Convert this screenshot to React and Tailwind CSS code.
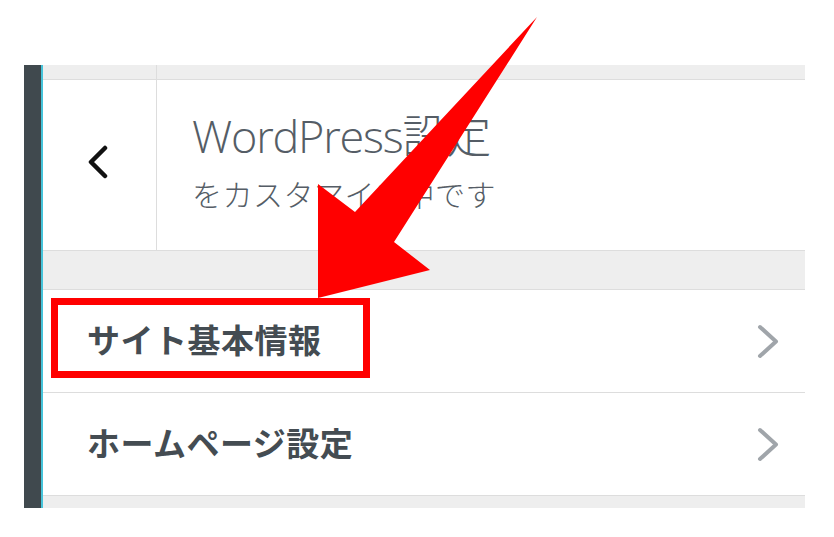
import React from "react";

const JP = { fontFamily: '"Open Sans", "Noto Sans CJK JP", sans-serif' };

const ChevronRight = () => (
  <svg width="22" height="35" viewBox="0 0 22 35" fill="none">
    <polyline points="3,3 19,17.5 3,32" stroke="#a0a5aa" strokeWidth="4" strokeLinecap="round" strokeLinejoin="round" />
  </svg>
);

const MenuRow = ({ label }) => (
  <div className="h-[103px] flex items-center justify-between pl-[44px] pr-[26px] bg-white border-b border-[#dddddd]">
    <span className="text-[33px] font-bold text-[#444c52] tracking-[0.5px]" style={JP}>
      {label}
    </span>
    <ChevronRight />
  </div>
);

export default function App() {
  return (
    <div className="relative w-[834px] h-[537px] bg-white overflow-hidden" style={JP}>
      <div className="flex pt-[65px] pl-[24px] h-[508px]">
        {/* admin sidebar edge */}
        <div className="w-[17px] bg-[#40494e]" />
        <div className="w-[2px] bg-[#46c3d9]" />

        {/* customizer panel */}
        <div className="w-[762px] flex flex-col bg-[#eeeeee]">
          <div className="flex h-[186px] border-b border-[#dddddd] bg-white">
            <div className="w-[114px] flex flex-col border-r border-[#dddddd]">
              <div className="h-[15px] bg-[#eeeeee] border-b border-[#dddddd]" />
              <div className="flex-1 flex items-center justify-center pr-[4px] pb-[6px]">
                <svg width="22" height="34" viewBox="0 0 22 34" fill="none">
                  <polyline points="18,3 4,17 18,31" stroke="#111111" strokeWidth="4.5" strokeLinecap="round" strokeLinejoin="round" />
                </svg>
              </div>
            </div>
            <div className="flex-1 flex flex-col">
              <div className="h-[15px] bg-[#eeeeee] border-b border-[#dddddd]" />
              <div className="pl-[35px] pt-[28px] text-[#555d66]">
                <div className="text-[45px] font-light leading-[56px] tracking-[-1.2px]">WordPress設定</div>
                <div className="text-[30px] font-light leading-[36px] mt-[13px] tracking-[0.5px]">をカスタマイズ中です</div>
              </div>
            </div>
          </div>

          <div className="h-[39px] bg-[#eeeeee] border-b border-[#dddddd]" />

          <MenuRow label="サイト基本情報" />
          <MenuRow label="ホームページ設定" />

          <div className="flex-1 bg-[#eeeeee]" />
        </div>
      </div>

      {/* highlight box */}
      <div className="absolute left-[51px] top-[298px] w-[319px] h-[80px] border-[7px] border-[#ff0000]" />

      {/* pointer arrow */}
      <svg className="absolute left-0 top-0" width="834" height="537" viewBox="0 0 834 537">
        <polygon points="537,17 394,242 430,270 318,298 318,184 355,212" fill="#ff0000" />
      </svg>
    </div>
  );
}
